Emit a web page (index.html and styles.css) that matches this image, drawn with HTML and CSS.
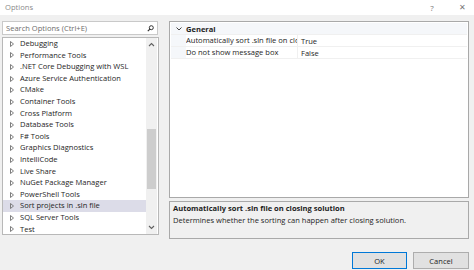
FILE: index.html
```html
<!DOCTYPE html>
<html lang="en">
<head>
    <meta charset="UTF-8">
    <title>Options</title>
    <link rel="stylesheet" href="styles.css">
</head>
<body>
    <div class="window">
        <div class="titlebar">
            <span class="title">Options</span>
            <span class="tb-btn">?</span>
            <span class="tb-btn close">✕</span>
        </div>

        <div class="content">
            <div class="left">
                <div class="search">
                    <span class="placeholder">Search Options (Ctrl+E)</span>
                    <svg class="search-icon" width="7" height="7" viewBox="0 0 7 7">
                        <circle cx="4.3" cy="2.7" r="2" fill="none" stroke="#333" stroke-width="1"/>
                        <line x1="2.9" y1="4.1" x2="0.8" y2="6.2" stroke="#333" stroke-width="1.2"/>
                    </svg>
                </div>
                <div class="tree">
                    <ul class="tree-list">
                        <li class="tree-item"><svg class="arrow" viewBox="0 0 4 6"><polygon points="0.5,0.5 3.5,3 0.5,5.5"/></svg>Debugging</li>
                        <li class="tree-item"><svg class="arrow" viewBox="0 0 4 6"><polygon points="0.5,0.5 3.5,3 0.5,5.5"/></svg>Performance Tools</li>
                        <li class="tree-item"><svg class="arrow" viewBox="0 0 4 6"><polygon points="0.5,0.5 3.5,3 0.5,5.5"/></svg>.NET Core Debugging with WSL</li>
                        <li class="tree-item"><svg class="arrow" viewBox="0 0 4 6"><polygon points="0.5,0.5 3.5,3 0.5,5.5"/></svg>Azure Service Authentication</li>
                        <li class="tree-item"><svg class="arrow" viewBox="0 0 4 6"><polygon points="0.5,0.5 3.5,3 0.5,5.5"/></svg>CMake</li>
                        <li class="tree-item"><svg class="arrow" viewBox="0 0 4 6"><polygon points="0.5,0.5 3.5,3 0.5,5.5"/></svg>Container Tools</li>
                        <li class="tree-item"><svg class="arrow" viewBox="0 0 4 6"><polygon points="0.5,0.5 3.5,3 0.5,5.5"/></svg>Cross Platform</li>
                        <li class="tree-item"><svg class="arrow" viewBox="0 0 4 6"><polygon points="0.5,0.5 3.5,3 0.5,5.5"/></svg>Database Tools</li>
                        <li class="tree-item"><svg class="arrow" viewBox="0 0 4 6"><polygon points="0.5,0.5 3.5,3 0.5,5.5"/></svg>F# Tools</li>
                        <li class="tree-item"><svg class="arrow" viewBox="0 0 4 6"><polygon points="0.5,0.5 3.5,3 0.5,5.5"/></svg>Graphics Diagnostics</li>
                        <li class="tree-item"><svg class="arrow" viewBox="0 0 4 6"><polygon points="0.5,0.5 3.5,3 0.5,5.5"/></svg>IntelliCode</li>
                        <li class="tree-item"><svg class="arrow" viewBox="0 0 4 6"><polygon points="0.5,0.5 3.5,3 0.5,5.5"/></svg>Live Share</li>
                        <li class="tree-item"><svg class="arrow" viewBox="0 0 4 6"><polygon points="0.5,0.5 3.5,3 0.5,5.5"/></svg>NuGet Package Manager</li>
                        <li class="tree-item"><svg class="arrow" viewBox="0 0 4 6"><polygon points="0.5,0.5 3.5,3 0.5,5.5"/></svg>PowerShell Tools</li>
                        <li class="tree-item selected"><svg class="arrow" viewBox="0 0 4 6"><polygon points="0.5,0.5 3.5,3 0.5,5.5"/></svg>Sort projects in .sln file</li>
                        <li class="tree-item"><svg class="arrow" viewBox="0 0 4 6"><polygon points="0.5,0.5 3.5,3 0.5,5.5"/></svg>SQL Server Tools</li>
                        <li class="tree-item"><svg class="arrow" viewBox="0 0 4 6"><polygon points="0.5,0.5 3.5,3 0.5,5.5"/></svg>Test</li>
                    </ul>
                    <div class="scrollbar">
                        <svg class="sb-arrow" width="7" height="5" viewBox="0 0 7 5">
                            <polyline points="1,4 3.5,1.5 6,4" fill="none" stroke="#606060" stroke-width="1.1"/>
                        </svg>
                        <div class="sb-track">
                            <div class="sb-thumb"></div>
                        </div>
                        <svg class="sb-arrow" width="7" height="5" viewBox="0 0 7 5">
                            <polyline points="1,1 3.5,3.5 6,1" fill="none" stroke="#606060" stroke-width="1.1"/>
                        </svg>
                    </div>
                </div>
            </div>

            <div class="right">
                <div class="propgrid">
                    <div class="pg-row pg-header">
                        <span class="pg-gutter">
                            <svg width="6" height="4" viewBox="0 0 6 4">
                                <polyline points="0.5,0.5 3,3 5.5,0.5" fill="none" stroke="#444" stroke-width="1"/>
                            </svg>
                        </span>
                        <span class="pg-cat">General</span>
                    </div>
                    <div class="pg-row">
                        <span class="pg-gutter"></span>
                        <span class="pg-name">Automatically sort .sln file on closing solution</span>
                        <span class="pg-value">True</span>
                    </div>
                    <div class="pg-row">
                        <span class="pg-gutter"></span>
                        <span class="pg-name">Do not show message box</span>
                        <span class="pg-value">False</span>
                    </div>
                </div>
                <div class="desc">
                    <div class="desc-title">Automatically sort .sln file on closing solution</div>
                    <div class="desc-text">Determines whether the sorting can happen after closing solution.</div>
                </div>
            </div>
        </div>

        <div class="footer">
            <button class="btn default">OK</button>
            <button class="btn">Cancel</button>
        </div>
    </div>
</body>
</html>
```

FILE: styles.css
```css
html, body {
    margin: 0;
    padding: 0;
}
body {
    width: 474px;
    height: 270px;
    overflow: hidden;
    background: #f0f0f0;
    font-family: "Open Sans", "Noto Sans", sans-serif;
    font-size: 7.55px;
    color: #1e1e1e;
}
.window {
    display: flex;
    flex-direction: column;
    height: 270px;
}
.titlebar {
    height: 14px;
    background: #ffffff;
    display: flex;
    align-items: center;
    padding: 0 0 1px 5px;
    color: #8a8a8a;
    font-size: 7.6px;
}
.title {
    flex: 1;
}
.tb-btn {
    width: 30px;
    text-align: center;
    color: #777;
    font-size: 8px;
}
.close {
    font-size: 7.5px;
    margin-right: -3px;
}

.content {
    display: flex;
    gap: 10px;
    padding: 6px 5px 0 2px;
}
.left {
    width: 157px;
    display: flex;
    flex-direction: column;
    gap: 2px;
}
.search {
    height: 12px;
    border: 1px solid #c9c9c9;
    background: #fff;
    display: flex;
    align-items: center;
    padding: 0 3px 0 3px;
    width: 148px;
}
.placeholder {
    flex: 1;
    color: #6d6d6d;
}
.search-icon {
    display: block;
}
.tree {
    height: 196px;
    border: 1px solid #b8b8b8;
    background: #fff;
    display: flex;
}
.tree-list {
    list-style: none;
    margin: 0;
    padding: 0;
    flex: 1;
}
.tree-item {
    height: 11.6px;
    line-height: 11.6px;
    display: flex;
    align-items: center;
    white-space: nowrap;
}
.tree-item.selected {
    background: #dcdce8;
}
.arrow {
    width: 4px;
    height: 6px;
    margin: 0 6px 0 7px;
    fill: none;
    stroke: #707070;
    stroke-width: 0.9;
    stroke-linejoin: round;
}
.scrollbar {
    width: 11px;
    margin-right: 1px;
    display: flex;
    flex-direction: column;
    align-items: center;
    background: #f0f0f0;
}
.sb-arrow {
    display: block;
    margin: 4px 0;
}
.sb-track {
    flex: 1;
    width: 100%;
    position: relative;
}
.sb-thumb {
    position: absolute;
    left: 1px;
    right: 1px;
    top: 78px;
    height: 60px;
    background: #cdcdcd;
}

.right {
    width: 300px;
    display: flex;
    flex-direction: column;
    gap: 3px;
}
.propgrid {
    height: 173px;
    border: 1px solid #a9a9a9;
    background: #fff;
    padding: 1px;
}
.pg-row {
    box-sizing: border-box;
    height: 12px;
    display: flex;
    align-items: center;
    border-bottom: 1px solid #f0f0f0;
    white-space: nowrap;
}
.pg-header {
    background: #f5f7fa;
}
.pg-gutter {
    width: 15px;
    display: flex;
    justify-content: center;
    align-items: center;
    align-self: stretch;
    background: #f5f7fa;
}
.pg-cat {
    font-weight: bold;
}
.pg-name {
    width: 111px;
    overflow: hidden;
    border-right: 1px solid #f0f0f0;
    align-self: stretch;
    line-height: 11px;
}
.pg-value {
    padding-left: 3px;
}
.desc {
    box-sizing: border-box;
    height: 38px;
    border: 1px solid #a9a9a9;
    padding: 1px 3px;
}
.desc-title {
    font-weight: bold;
    line-height: 11.5px;
}
.desc-text {
    line-height: 11.5px;
}

.footer {
    display: flex;
    justify-content: flex-end;
    gap: 6px;
    padding: 13px 5px 0 0;
}
.btn {
    width: 56px;
    height: 17px;
    background: #e1e1e1;
    border: 1px solid #adadad;
    font-family: inherit;
    font-size: 7.55px;
    color: #1e1e1e;
    padding: 0;
}
.btn.default {
    border-color: #0078d7;
    width: 55px;
}
```
